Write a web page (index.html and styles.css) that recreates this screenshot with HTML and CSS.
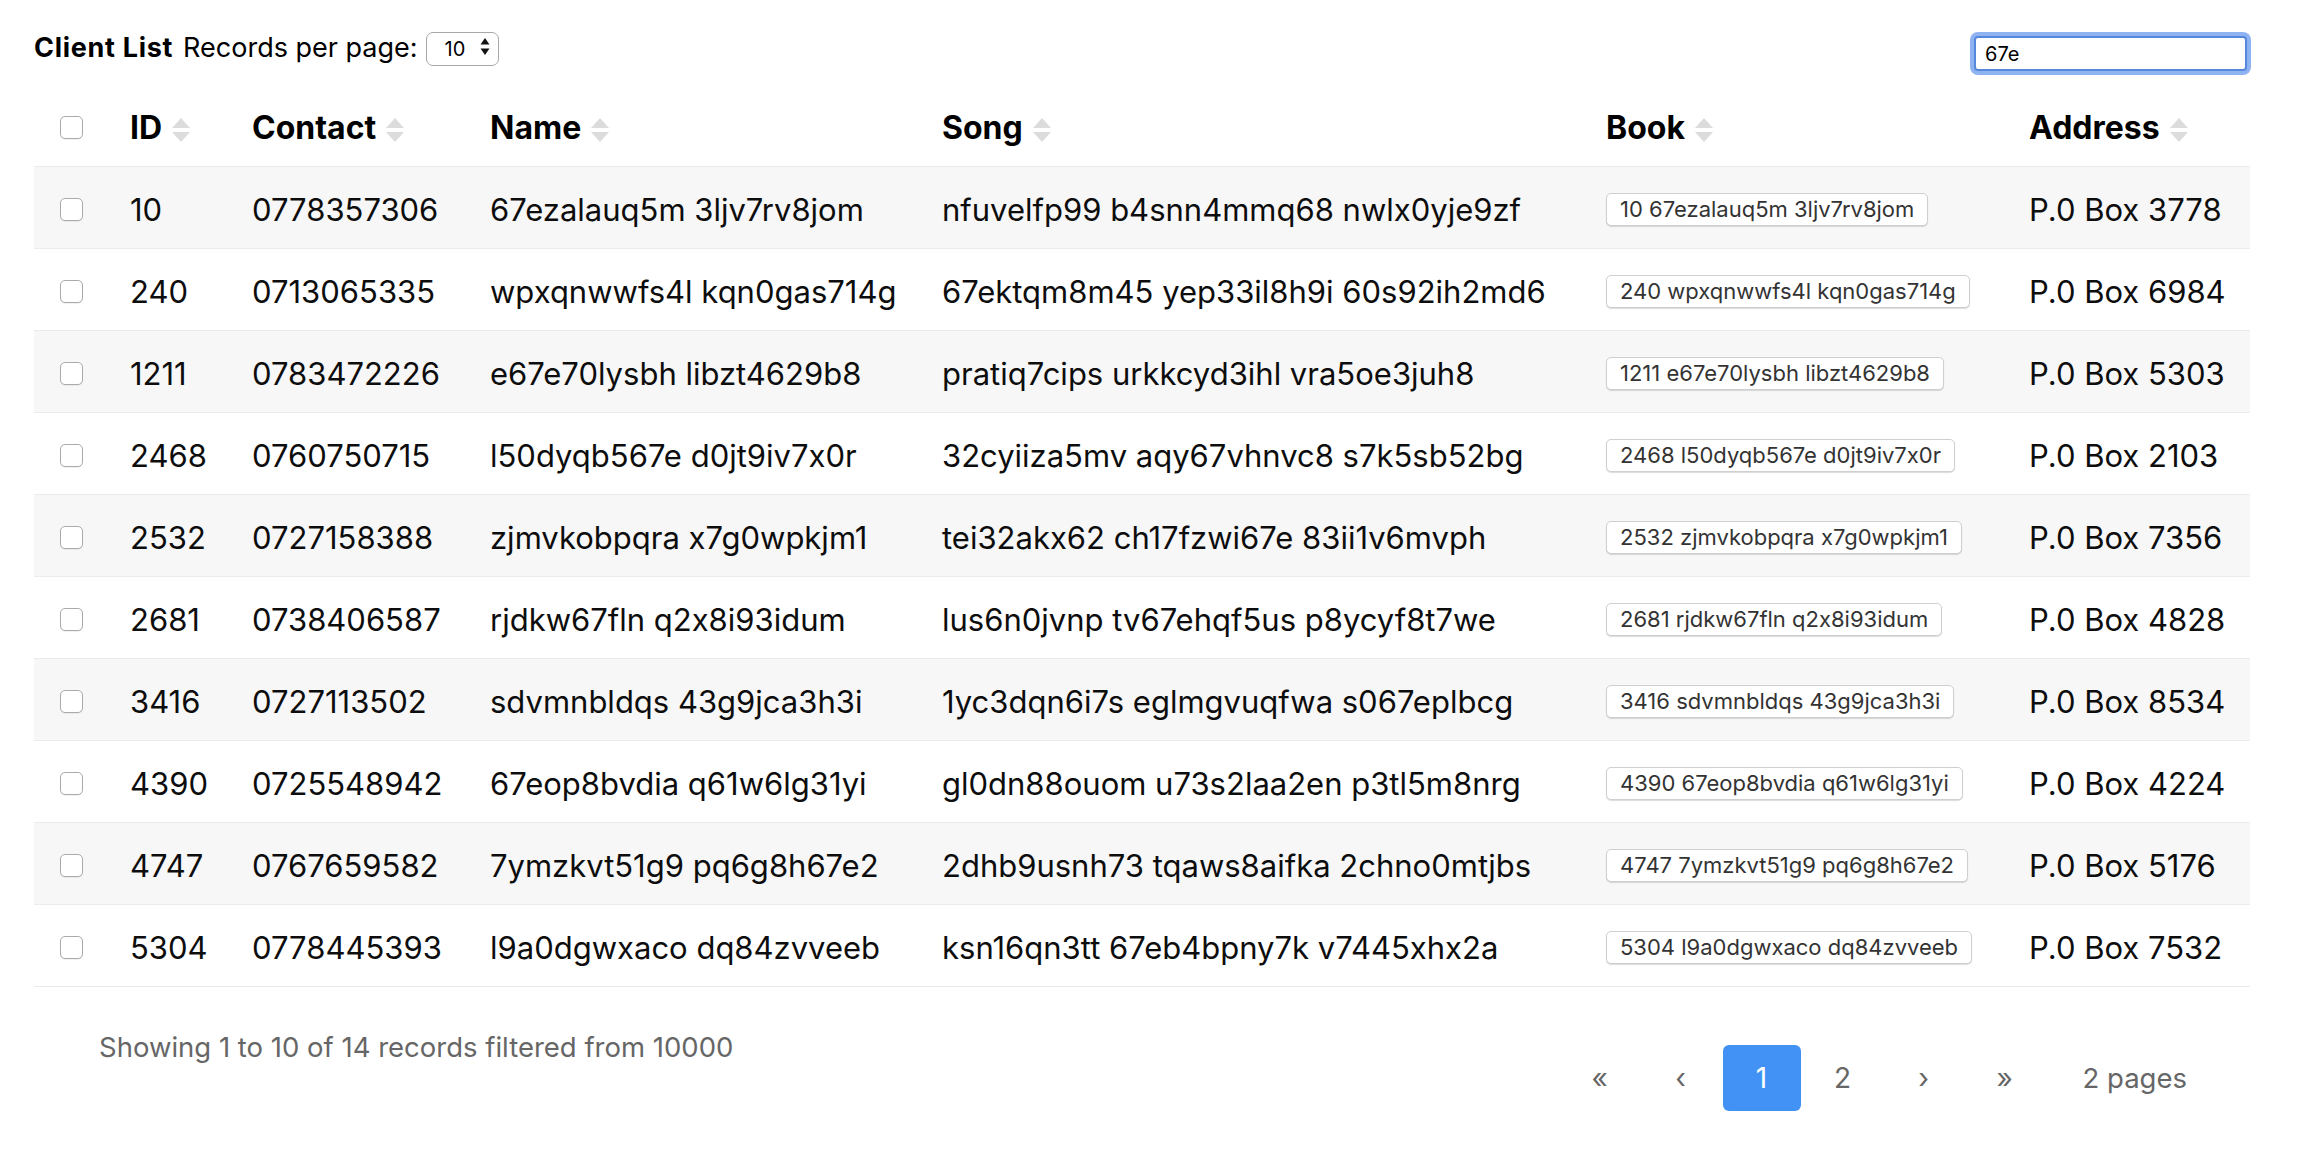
FILE: index.html
```html
<!DOCTYPE html>
<html lang="en">
<head>
<meta charset="utf-8">
<title>Client List</title>
<link rel="stylesheet" href="styles.css">
</head>
<body>
<div class="page">
  <div class="topbar">
    <div class="title-group">
      <span class="title">Client List</span>
      <span class="per-page">Records per page:</span>
      <span class="select-wrap">
        <select class="per-page-select"><option>10</option><option>25</option><option>50</option></select>
        <svg class="select-arrows" width="10" height="19" viewBox="0 0 10 19"><polygon points="5,1 9.5,7.5 0.5,7.5" fill="#111"/><polygon points="0.5,11.5 9.5,11.5 5,18" fill="#111"/></svg>
      </span>
    </div>
    <input class="search" type="text" value="67e">
  </div>

  <table class="grid">
    <colgroup>
      <col class="c-check"><col class="c-id"><col class="c-contact"><col class="c-name"><col class="c-song"><col class="c-book"><col class="c-address">
    </colgroup>
    <thead>
      <tr>
        <th class="check-cell"><input type="checkbox" class="cb"></th>
        <th>ID<svg class="sort" width="20" height="24" viewBox="0 0 20 24"><polygon points="10,0 19,10 1,10" /><polygon points="1,14 19,14 10,24" /></svg></th>
        <th>Contact<svg class="sort" width="20" height="24" viewBox="0 0 20 24"><polygon points="10,0 19,10 1,10" /><polygon points="1,14 19,14 10,24" /></svg></th>
        <th>Name<svg class="sort" width="20" height="24" viewBox="0 0 20 24"><polygon points="10,0 19,10 1,10" /><polygon points="1,14 19,14 10,24" /></svg></th>
        <th>Song<svg class="sort" width="20" height="24" viewBox="0 0 20 24"><polygon points="10,0 19,10 1,10" /><polygon points="1,14 19,14 10,24" /></svg></th>
        <th>Book<svg class="sort" width="20" height="24" viewBox="0 0 20 24"><polygon points="10,0 19,10 1,10" /><polygon points="1,14 19,14 10,24" /></svg></th>
        <th>Address<svg class="sort" width="20" height="24" viewBox="0 0 20 24"><polygon points="10,0 19,10 1,10" /><polygon points="1,14 19,14 10,24" /></svg></th>
      </tr>
    </thead>
    <tbody>
      <tr><td class="check-cell"><input type="checkbox" class="cb"></td><td>10</td><td>0778357306</td><td>67ezalauq5m 3ljv7rv8jom</td><td>nfuvelfp99 b4snn4mmq68 nwlx0yje9zf</td><td><span class="tag">10 67ezalauq5m 3ljv7rv8jom</span></td><td>P.0 Box 3778</td></tr>
      <tr><td class="check-cell"><input type="checkbox" class="cb"></td><td>240</td><td>0713065335</td><td>wpxqnwwfs4l kqn0gas714g</td><td>67ektqm8m45 yep33il8h9i 60s92ih2md6</td><td><span class="tag">240 wpxqnwwfs4l kqn0gas714g</span></td><td>P.0 Box 6984</td></tr>
      <tr><td class="check-cell"><input type="checkbox" class="cb"></td><td>1211</td><td>0783472226</td><td>e67e70lysbh libzt4629b8</td><td>pratiq7cips urkkcyd3ihl vra5oe3juh8</td><td><span class="tag">1211 e67e70lysbh libzt4629b8</span></td><td>P.0 Box 5303</td></tr>
      <tr><td class="check-cell"><input type="checkbox" class="cb"></td><td>2468</td><td>0760750715</td><td>l50dyqb567e d0jt9iv7x0r</td><td>32cyiiza5mv aqy67vhnvc8 s7k5sb52bg</td><td><span class="tag">2468 l50dyqb567e d0jt9iv7x0r</span></td><td>P.0 Box 2103</td></tr>
      <tr><td class="check-cell"><input type="checkbox" class="cb"></td><td>2532</td><td>0727158388</td><td>zjmvkobpqra x7g0wpkjm1</td><td>tei32akx62 ch17fzwi67e 83ii1v6mvph</td><td><span class="tag">2532 zjmvkobpqra x7g0wpkjm1</span></td><td>P.0 Box 7356</td></tr>
      <tr><td class="check-cell"><input type="checkbox" class="cb"></td><td>2681</td><td>0738406587</td><td>rjdkw67fln q2x8i93idum</td><td>lus6n0jvnp tv67ehqf5us p8ycyf8t7we</td><td><span class="tag">2681 rjdkw67fln q2x8i93idum</span></td><td>P.0 Box 4828</td></tr>
      <tr><td class="check-cell"><input type="checkbox" class="cb"></td><td>3416</td><td>0727113502</td><td>sdvmnbldqs 43g9jca3h3i</td><td>1yc3dqn6i7s eglmgvuqfwa s067eplbcg</td><td><span class="tag">3416 sdvmnbldqs 43g9jca3h3i</span></td><td>P.0 Box 8534</td></tr>
      <tr><td class="check-cell"><input type="checkbox" class="cb"></td><td>4390</td><td>0725548942</td><td>67eop8bvdia q61w6lg31yi</td><td>gl0dn88ouom u73s2laa2en p3tl5m8nrg</td><td><span class="tag">4390 67eop8bvdia q61w6lg31yi</span></td><td>P.0 Box 4224</td></tr>
      <tr><td class="check-cell"><input type="checkbox" class="cb"></td><td>4747</td><td>0767659582</td><td>7ymzkvt51g9 pq6g8h67e2</td><td>2dhb9usnh73 tqaws8aifka 2chno0mtjbs</td><td><span class="tag">4747 7ymzkvt51g9 pq6g8h67e2</span></td><td>P.0 Box 5176</td></tr>
      <tr><td class="check-cell"><input type="checkbox" class="cb"></td><td>5304</td><td>0778445393</td><td>l9a0dgwxaco dq84zvveeb</td><td>ksn16qn3tt 67eb4bpny7k v7445xhx2a</td><td><span class="tag">5304 l9a0dgwxaco dq84zvveeb</span></td><td>P.0 Box 7532</td></tr>
    </tbody>
  </table>

  <div class="footer">
    <div class="summary">Showing 1 to 10 of 14 records filtered from 10000</div>
    <div class="pager">
      <span class="page-item">«</span>
      <span class="page-item">‹</span>
      <span class="page-item active">1</span>
      <span class="page-item">2</span>
      <span class="page-item">›</span>
      <span class="page-item">»</span>
      <span class="pages-count">2 pages</span>
    </div>
  </div>
</div>
</body>
</html>
```

FILE: styles.css
```css
html, body {
  margin: 0;
  padding: 0;
  background: #fff;
}

body {
  font-family: Inter, "Noto Sans", "Liberation Sans", sans-serif;
  font-feature-settings: "calt" 0;
  color: #000;
}

.page {
  padding: 29px 62px 0 34px;
}

.topbar {
  display: flex;
  justify-content: space-between;
  align-items: flex-start;
  height: 56px;
}

.title-group {
  display: flex;
  align-items: center;
  height: 36px;
  font-size: 27px;
}

.title {
  font-weight: 700;
  letter-spacing: 0.7px;
  margin-right: 10px;
}

.select-wrap {
  position: relative;
  display: inline-block;
  margin-left: 8px;
  height: 34px;
}

.per-page-select {
  appearance: none;
  -webkit-appearance: none;
  width: 73px;
  height: 34px;
  box-sizing: border-box;
  border: 1px solid #a8a8a8;
  border-radius: 7px;
  background: #fff;
  color: #000;
  font-family: Inter, "Noto Sans", sans-serif;
  font-size: 20px;
  padding: 0 0 0 18px;
  margin: 0;
}

.select-arrows {
  position: absolute;
  right: 9px;
  top: 7px;
  pointer-events: none;
}

.search {
  box-sizing: border-box;
  width: 273px;
  height: 35px;
  margin: 7px 3px 0 0;
  padding: 0 9px;
  border: 2px solid #5587dd;
  border-radius: 4px;
  box-shadow: 0 0 0 4px #8fb3f1;
  outline: none;
  font-family: Inter, "Noto Sans", sans-serif;
  font-feature-settings: "calt" 0;
  font-size: 20px;
  color: #000;
  background: #fff;
}

.grid {
  width: 100%;
  border-collapse: collapse;
  table-layout: fixed;
}

.c-check { width: 84px; }
.c-id { width: 122px; }
.c-contact { width: 238px; }
.c-name { width: 452px; }
.c-song { width: 664px; }
.c-book { width: 423px; }
.c-address { width: 233px; }

.grid th,
.grid td {
  padding: 24px 12px 20px;
  line-height: 37px;
  font-size: 31px;
  text-align: left;
  vertical-align: middle;
  white-space: nowrap;
  border-bottom: 1px solid #ebebeb;
}

.grid th {
  font-size: 32px;
  font-weight: 700;
  color: #000;
}

.grid td {
  color: #0d0d0d;
}

.grid tbody tr:nth-child(odd) {
  background: #f7f7f7;
}

.grid .check-cell {
  padding-left: 26px;
  padding-right: 0;
}

.cb {
  appearance: none;
  -webkit-appearance: none;
  display: inline-block;
  vertical-align: top;
  box-sizing: border-box;
  width: 23px;
  height: 23px;
  margin: 7px 0 0 0;
  border: 1px solid #aaaaaa;
  border-radius: 5px;
  background: #fff;
  box-shadow: 0 1px 1px rgba(0, 0, 0, 0.06);
}

.sort {
  fill: #dcdcdc;
  margin-left: 9px;
  vertical-align: -3px;
}

.tag {
  display: inline-block;
  vertical-align: top;
  margin-top: 2px;
  font-size: 22px;
  line-height: 31px;
  padding: 0 13px;
  border: 1px solid #cfcfcf;
  border-radius: 5px;
  color: #333;
  background: #fff;
  box-shadow: 0 1px 1px rgba(0, 0, 0, 0.14);
}

.footer {
  display: flex;
  justify-content: space-between;
  align-items: flex-start;
}

.summary {
  margin: 42px 0 0 65px;
  font-size: 27.5px;
  line-height: 36px;
  color: #666;
}

.pager {
  display: flex;
  align-items: center;
  gap: 3px;
  margin: 58px 63px 0 0;
}

.page-item {
  width: 78px;
  height: 66px;
  display: flex;
  align-items: center;
  justify-content: center;
  font-size: 28px;
  color: #666;
  border-radius: 6px;
}

.page-item.active {
  background: #4292f5;
  color: #fff;
}

.pages-count {
  margin-left: 36px;
  font-size: 27.5px;
  color: #666;
}
```
